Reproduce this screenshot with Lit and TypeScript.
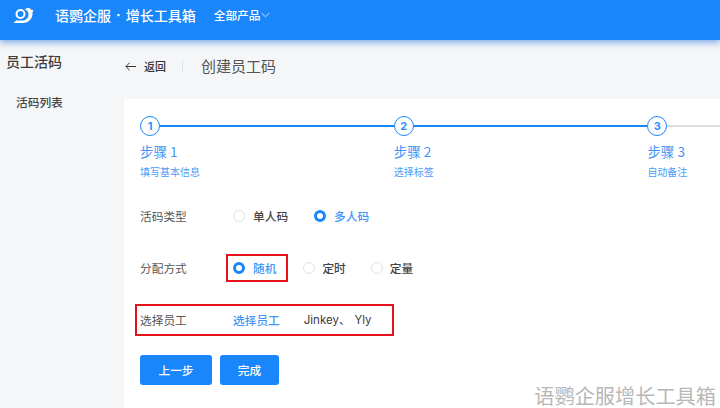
import { LitElement, html, css, svg } from "lit";
import { customElement } from "lit/decorators.js";

const steps = [
  { n: 1, title: "步骤 1", sub: "填写基本信息" },
  { n: 2, title: "步骤 2", sub: "选择标签" },
  { n: 3, title: "步骤 3", sub: "自动备注" },
];

@customElement("app-root")
export class AppRoot extends LitElement {
  static styles = css`
    :host {
      display: block;
      width: 720px;
      height: 408px;
      overflow: hidden;
      position: relative;
      background: #f5f6f8;
      font-family: "Noto Sans CJK SC", "Noto Sans", sans-serif;
      color: #4a4a4a;
    }
    * { box-sizing: border-box; }
    .header {
      height: 40px;
      background: #1a86fb;
      box-shadow: 0 3px 6px rgba(26, 110, 220, 0.5);
      display: flex;
      align-items: center;
      padding-bottom: 11px;
      color: #fff;
      position: relative;
    }
    .logo { margin-left: 13px; width: 21px; height: 18px; flex: none; }
    .brand { margin-left: 21px; font-size: 14px; font-weight: 500; display: flex; align-items: center; }
    .brand b { font: 700 14px "Inter", sans-serif; margin: 0 5px; }
    .products { margin-left: 18px; font-size: 11.7px; font-weight: 500; display: flex; align-items: center; gap: 1px; }
    .products svg { width: 9px; height: 6px; }
    .body { display: flex; height: 368px; }
    .side { width: 124px; flex: none; padding: 11px 0 0 6px; }
    .side h2 { margin: 0; font-size: 14px; line-height: 20px; font-weight: 500; color: #3c3c3c; }
    .side div { margin: 22px 0 0 10px; font-size: 11.7px; line-height: 17px; font-weight: 500; color: #444; }
    .main { flex: 1; display: flex; flex-direction: column; min-width: 0; }
    .top { height: 59px; flex: none; display: flex; align-items: center; padding-bottom: 7px; }
    .back { display: flex; align-items: center; font-size: 11px; font-weight: 500; color: #333; }
    .back svg { width: 11px; height: 9px; margin: 0 8px 0 1px; }
    .sep { width: 1px; height: 12px; background: #e2e3e6; margin: 0 18px 0 16px; }
    .top h1 { margin: 0; padding-bottom: 2px; font-size: 15px; font-weight: 400; color: #555; }
    .card { flex: 1; background: #fff; padding: 17px 0 0 16px; }
    .steps { display: flex; width: 760px; }
    .step { width: 253.7px; flex: none; }
    .track { display: flex; align-items: center; height: 20px; }
    .dot {
      width: 20px; height: 20px; flex: none;
      border: 1.5px solid #1a86fb; border-radius: 50%;
      display: flex; align-items: center; justify-content: center;
      font-size: 11px; font-weight: 700; color: #2f8ffb;
      font-family: "Inter", sans-serif; line-height: 1;
    }
    .line { flex: 1; height: 2px; background: #1a86fb; }
    .line.off { background: #dcdde1; }
    .title { margin-top: 6px; font-size: 13.5px; line-height: 18px; color: #3f95f8; }
    .sub { margin-top: 5px; font-size: 10px; line-height: 14px; color: #4a9cf8; }
    .form { margin-top: 27px; display: flex; flex-direction: column; gap: 32px; }
    .row { display: flex; align-items: center; height: 20px; font-size: 11.7px; }
    .label { width: 93px; flex: none; color: #555; padding-bottom: 2px; }
    .opt { display: flex; align-items: center; gap: 8px; color: #444; font-weight: 500; }
    .opt span { padding-bottom: 2px; }
    .ring { width: 12px; height: 12px; border-radius: 50%; border: 1px solid #dfe1e8; background: #fff; flex: none; }
    .on .ring { border: 3.5px solid #1a86fb; }
    .on.blue { color: #3f95f8; }
    .r1 .opt + .opt { margin-left: 26px; }
    .r2 .opt + .opt { margin-left: 22px; gap: 7px; }
    .r2 .opt + .opt + .opt { margin-left: 25px; }
    .mark { outline: 2px solid #e8101a; outline-offset: 5px; height: 14px; padding-right: 5px; }
    .wide {
      outline: 2px solid #e8101a;
      height: 28px;
      width: 255px;
      margin: -4px 0 -4px -3px;
      padding-left: 3px;
    }
    .link { color: #3f95f8; font-weight: 500; padding-bottom: 2px; }
    .names { margin-left: 24px; padding-bottom: 2px; color: #3a3a3a; font-family: "Inter", "Noto Sans CJK SC", sans-serif; font-size: 11.5px; }
    .names span { margin-left: 4px; }
    .btns { display: flex; gap: 8px; margin-top: 25px; }
    .btn {
      height: 30px; border-radius: 3px; border: 0; background: #1a86fb; color: #fff;
      font: 500 11.7px "Noto Sans CJK SC", sans-serif; padding: 0 0 2px;
    }
    .b1 { width: 72px; }
    .b2 { width: 59px; }
    .wm {
      position: absolute; right: 4px; bottom: 0;
      font-size: 20.2px; line-height: 24px; color: #b8b8b8;
    }
  `;

  private logo() {
    return svg`<svg class="logo" viewBox="0 0 21 18" fill="none">
      <circle cx="7.5" cy="8" r="4" stroke="#fff" stroke-width="2"/>
      <path d="M0.5 17 L3 14.6 H9 C13 14.6 15.5 12 15.5 8.5 C15.5 6 14 4 12 3.5 C13.5 1.5 17 1.5 18.5 4 L20.5 4 L19.5 6.5 C20 12.5 15.5 17 10 17 Z" fill="#fff"/>
    </svg>`;
  }

  render() {
    return html`
      <div class="header">
        ${this.logo()}
        <div class="brand">语鹦企服<b>·</b>增长工具箱</div>
        <div class="products">全部产品
          <svg viewBox="0 0 9 6" fill="none"><path d="M.6 1l3.9 3.8L8.4 1" stroke="#cfe4fe" stroke-width="1"/></svg>
        </div>
      </div>
      <div class="body">
        <div class="side">
          <h2>员工活码</h2>
          <div>活码列表</div>
        </div>
        <div class="main">
          <div class="top">
            <div class="back">
              <svg viewBox="0 0 11 9" fill="none"><path d="M11 4.5H1M4.6 .8L.9 4.5l3.7 3.7" stroke="#333" stroke-width="1"/></svg>
              返回
            </div>
            <div class="sep"></div>
            <h1>创建员工码</h1>
          </div>
          <div class="card">
            <div class="steps">
              ${steps.map(
                (s, i) => html`<div class="step">
                  <div class="track">
                    <div class="dot">${s.n}</div>
                    <div class="line ${i === 2 ? "off" : ""}"></div>
                  </div>
                  <div class="title">${s.title}</div>
                  <div class="sub">${s.sub}</div>
                </div>`
              )}
            </div>
            <div class="form">
              <div class="row r1">
                <div class="label">活码类型</div>
                <div class="opt"><i class="ring"></i><span>单人码</span></div>
                <div class="opt on blue"><i class="ring"></i><span>多人码</span></div>
              </div>
              <div class="row r2">
                <div class="label">分配方式</div>
                <div class="opt on blue mark"><i class="ring"></i><span>随机</span></div>
                <div class="opt"><i class="ring"></i><span>定时</span></div>
                <div class="opt"><i class="ring"></i><span>定量</span></div>
              </div>
              <div class="row wide">
                <div class="label">选择员工</div>
                <div class="link">选择员工</div>
                <div class="names">Jinkey、<span>Yly</span></div>
              </div>
            </div>
            <div class="btns">
              <button class="btn b1">上一步</button>
              <button class="btn b2">完成</button>
            </div>
          </div>
        </div>
      </div>
      <div class="wm">语鹦企服增长工具箱</div>
    `;
  }
}
